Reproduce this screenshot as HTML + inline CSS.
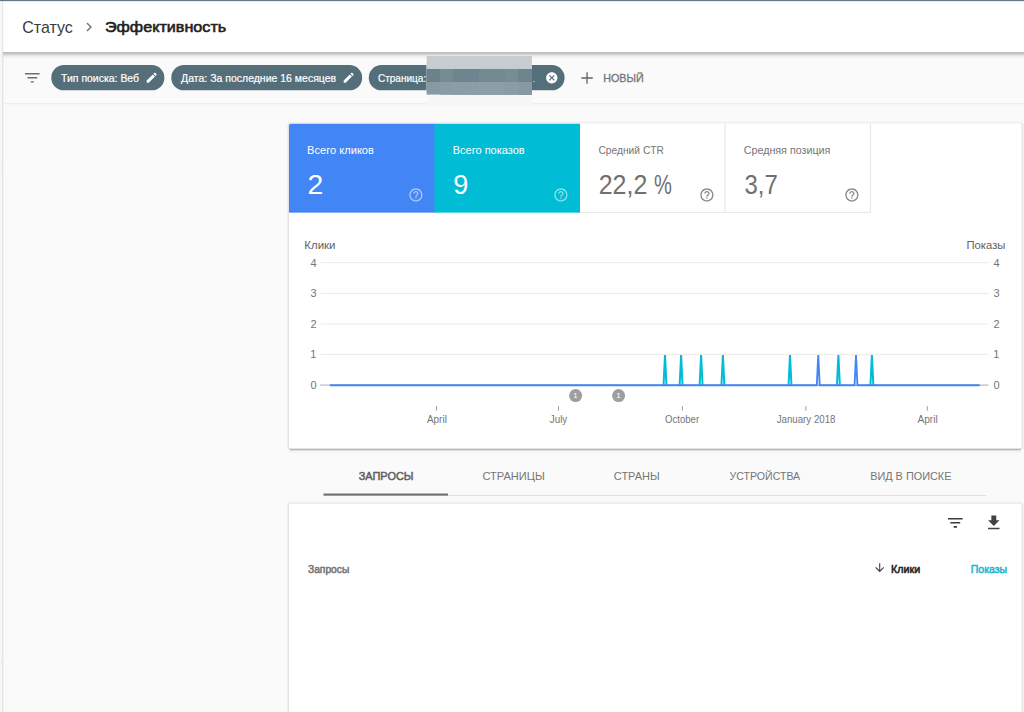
<!DOCTYPE html>
<html lang="ru">
<head>
<meta charset="utf-8">
<title>Эффективность</title>
<style>
*{box-sizing:border-box;margin:0;padding:0}
html,body{width:1024px;height:712px;overflow:hidden;background:#fafafa;font-family:"Liberation Sans",sans-serif}
body{position:relative}
.abs{position:absolute}
.t{position:absolute;white-space:nowrap;line-height:1;transform-origin:0 50%}
#bg{position:absolute;left:0;top:0}
</style>
</head>
<body>
<svg id="bg" width="1024" height="712" viewBox="0 0 1024 712"><defs><linearGradient id="hs" x1="0" y1="0" x2="0" y2="1"><stop offset="0" stop-color="#000" stop-opacity=".24"/><stop offset=".16" stop-color="#000" stop-opacity=".235"/><stop offset=".30" stop-color="#000" stop-opacity=".18"/><stop offset=".44" stop-color="#000" stop-opacity=".11"/><stop offset=".58" stop-color="#000" stop-opacity=".065"/><stop offset=".72" stop-color="#000" stop-opacity=".032"/><stop offset=".86" stop-color="#000" stop-opacity=".012"/><stop offset="1" stop-color="#000" stop-opacity="0"/></linearGradient></defs><rect x="0" y="0" width="2" height="712" fill="#f7f7f7" /><rect x="2" y="0" width="1" height="712" fill="#e6e6e6" /><rect x="3" y="0" width="0.6" height="712" fill="#ececec" /><rect x="0" y="167.4" width="2.4" height="1.2" fill="#e9e9e9" /><rect x="0" y="661.8" width="2.4" height="1" fill="#e9e9e9" /><rect x="3.2" y="103.1" width="1020.8" height="1.2" fill="#ededed" /><rect x="51.25" y="65.05" width="113.15" height="25.3" fill="#546e7a" rx="12.65"/><rect x="171.25" y="65.05" width="190.95" height="25.3" fill="#546e7a" rx="12.65"/><rect x="368.75" y="65.05" width="195.85" height="25.3" fill="#546e7a" rx="12.65"/><rect x="3.2" y="52" width="1020.8" height="7" fill="url(#hs)" /><rect x="426.6" y="56" width="105.3" height="48.7" fill="#f7f7f7" /><rect x="426.6" y="56" width="105.3" height="13" fill="#c5cdd0" /><rect x="426.6" y="69" width="105.3" height="13" fill="#6c818b" /><rect x="426.6" y="82" width="105.3" height="12.6" fill="#8799a2" /><rect x="440" y="69" width="91.9" height="13" fill="#768b94" /><rect x="440" y="82" width="91.9" height="12.6" fill="#8a9ca4" /><rect x="453" y="69" width="78.9" height="13" fill="#6e848f" /><rect x="453" y="82" width="78.9" height="12.6" fill="#8a9ea5" /><rect x="466" y="69" width="65.9" height="13" fill="#6e848f" /><rect x="466" y="82" width="65.9" height="12.6" fill="#8a9ea5" /><rect x="479" y="69" width="52.9" height="13" fill="#748992" /><rect x="479" y="82" width="52.9" height="12.6" fill="#8da0a7" /><rect x="492" y="69" width="39.9" height="13" fill="#748992" /><rect x="492" y="82" width="39.9" height="12.6" fill="#8da0a7" /><rect x="505" y="69" width="26.9" height="13" fill="#788c94" /><rect x="505" y="82" width="26.9" height="12.6" fill="#8a9da5" /><rect x="518" y="69" width="13.9" height="13" fill="#6d838d" /><rect x="518" y="82" width="13.9" height="12.6" fill="#8799a2" /><rect x="531" y="69" width="0.9" height="13" fill="#6f8690" /><rect x="531" y="82" width="0.9" height="12.6" fill="#8799a2" /><rect x="3.4" y="0" width="1020.6" height="52" fill="#fff" /><rect x="0" y="0" width="1024" height="1.15" fill="#617985" /><rect x="289" y="121" width="732.5" height="1" fill="#f7f7f7" /><rect x="288.5" y="122" width="733.3" height="1" fill="#f1f1f1" /><rect x="288.5" y="123" width="733.3" height="1" fill="#eeeeee" /><rect x="287" y="124" width="1" height="325" fill="#f1f1f1" /><rect x="288" y="123" width="1" height="326" fill="#e2e2e2" /><rect x="1021" y="123" width="1" height="325.6" fill="#e8e8e8" /><rect x="1022" y="123" width="1" height="325.8" fill="#e8e8e8" /><rect x="1023" y="124" width="1" height="325" fill="#f0f0f0" /><rect x="288.6" y="448" width="733" height="1" fill="#e4e4e4" /><rect x="289.6" y="449" width="731.3" height="1" fill="#b8b8b8" rx=".5"/><rect x="289.4" y="450" width="731.9" height="1" fill="#e0e0e0" rx=".5"/><rect x="289.4" y="451" width="732.2" height="1" fill="#f2f2f2" /><rect x="290" y="452" width="732" height="1" fill="#f7f7f7" /><rect x="289" y="123.5" width="732.45" height="324.55" fill="#fff" rx="1.5"/><rect x="289" y="501" width="732.5" height="1" fill="#f7f7f7" /><rect x="288.5" y="502" width="733.3" height="1" fill="#f1f1f1" /><rect x="288.5" y="503" width="733.3" height="1" fill="#eeeeee" /><rect x="287" y="504" width="1" height="227" fill="#f1f1f1" /><rect x="288" y="503" width="1" height="228" fill="#e2e2e2" /><rect x="1021" y="503" width="1" height="227.6" fill="#e8e8e8" /><rect x="1022" y="503" width="1" height="227.8" fill="#e8e8e8" /><rect x="1023" y="504" width="1" height="227" fill="#f0f0f0" /><rect x="289" y="504" width="732.45" height="226" fill="#fff" rx="1.5"/><clipPath id="cc"><rect x="289" y="123.5" width="732.45" height="400" rx="2"/></clipPath><g clip-path="url(#cc)"><rect x="289" y="123.5" width="146" height="89.15" fill="#4285f4" /><rect x="434.5" y="123.5" width="145.5" height="89.15" fill="#00bcd4" /></g><rect x="580" y="211.9" width="291" height="1" fill="#e6e6e6" /><rect x="724.5" y="123.5" width="1" height="88.9" fill="#e4e4e4" /><rect x="870" y="123.5" width="1" height="88.9" fill="#e6e6e6" /><rect x="320.2" y="262.2" width="668.3" height="1" fill="#ebebeb" /><rect x="320.2" y="292.94" width="668.3" height="1" fill="#ebebeb" /><rect x="320.2" y="323.35" width="668.3" height="1" fill="#ebebeb" /><rect x="320.2" y="353.94" width="668.3" height="1" fill="#ebebeb" /><rect x="320.2" y="384.3" width="668.3" height="1.7" fill="#cecece" /><g fill="none" stroke="#00bcd4" stroke-width="2" stroke-linejoin="miter"><path d="M663.55 385.1L665.00 355L666.45 385.1"/><path d="M679.65 385.1L681.10 355L682.55 385.1"/><path d="M699.65 385.1L701.10 355L702.55 385.1"/><path d="M721.45 385.1L722.90 355L724.35 385.1"/><path d="M788.55 385.1L790.00 355L791.45 385.1"/><path d="M836.95 385.1L838.40 355L839.85 385.1"/><path d="M870.45 385.1L871.90 355L873.35 385.1"/></g><path d="M329.8 385.25L816.80 385.25L818.25 355L819.70 385.25L854.55 385.25L856.00 355L857.45 385.25L979.7 385.25" fill="none" stroke="#4285f4" stroke-width="1.85" stroke-linejoin="miter"/><rect x="436" y="406.2" width="1" height="4.5" fill="#9e9e9e" /><rect x="558" y="406.2" width="1" height="4.5" fill="#9e9e9e" /><rect x="681.9" y="406.2" width="1" height="4.5" fill="#9e9e9e" /><rect x="805.4" y="406.2" width="1" height="4.5" fill="#9e9e9e" /><rect x="926.8" y="406.2" width="1" height="4.5" fill="#9e9e9e" /><circle cx="575.6" cy="395.6" r="6.5" fill="#9e9e9e"/><circle cx="618.6" cy="395.6" r="6.5" fill="#9e9e9e"/><rect x="323.5" y="495" width="662.5" height="1" fill="#e0e0e0" /><rect x="323.5" y="493.5" width="124.5" height="2.1" fill="#707070" /></svg>
<svg class="abs" style="left:24.70px;top:72.90px" width="15" height="11" viewBox="0 0 15 11"><path d="M0 0.7h14.6M2.4 4.8h9.8M5.65 8.9h3.3" stroke="#6e6e6e" stroke-width="1.4" fill="none"/></svg>
<svg class="abs" style="left:144.80px;top:71.20px;" width="13.4" height="13.4" viewBox="0 0 24 24"><path fill="#fff" d="M3 17.25V21h3.75L17.81 9.94l-3.75-3.75L3 17.25zM20.71 7.04a1 1 0 0 0 0-1.41l-2.34-2.34a1 1 0 0 0-1.41 0l-1.83 1.83 3.75 3.75 1.83-1.83z"/></svg>
<svg class="abs" style="left:342.00px;top:71.20px;" width="13.4" height="13.4" viewBox="0 0 24 24"><path fill="#fff" d="M3 17.25V21h3.75L17.81 9.94l-3.75-3.75L3 17.25zM20.71 7.04a1 1 0 0 0 0-1.41l-2.34-2.34a1 1 0 0 0-1.41 0l-1.83 1.83 3.75 3.75 1.83-1.83z"/></svg>
<svg class="abs" style="left:544.80px;top:70.90px;" width="13.6" height="13.6" viewBox="0 0 24 24"><path fill="#fff" d="M12 2C6.47 2 2 6.47 2 12s4.47 10 10 10 10-4.47 10-10S17.53 2 12 2zm5 13.59L15.59 17 12 13.41 8.41 17 7 15.59 10.59 12 7 8.41 8.41 7 12 10.59 15.59 7 17 8.41 13.41 12 17 15.59z"/></svg>
<div class="abs" style="left:533px;top:81px;width:2px;height:1px;background:#a3b3bb"></div>
<div class="abs" style="left:0;top:60px;width:427px;height:40px;overflow:hidden"><div class="abs" style="left:0;top:-60px"><span id="c3" class="t" style="left:378px;top:73px;font-size:11px;font-weight:normal;color:#fff;transform:translateX(-0.10px) scaleX(0.9126);-webkit-text-stroke:0.2px #fff;">Страница:</span></div></div>
<span id="c1" class="t" style="left:61px;top:73px;font-size:11px;font-weight:normal;color:#fff;transform:translateX(0.05px) scaleX(0.9508);-webkit-text-stroke:0.2px #fff;">Тип поиска: Веб</span>
<span id="c2" class="t" style="left:181px;top:73px;font-size:11px;font-weight:normal;color:#fff;transform:translateX(0.10px) scaleX(0.9537);-webkit-text-stroke:0.2px #fff;">Дата: За последние 16 месяцев</span>
<svg class="abs" style="left:581px;top:72px" width="12" height="12" viewBox="0 0 12 12"><path d="M6.05 0.2v11.5M0.3 5.95h11.5" stroke="#666" stroke-width="1.35"/></svg>
<span id="new" class="t" style="left:604px;top:73px;font-size:11px;font-weight:normal;color:#757575;transform:translateX(-0.85px) scaleX(0.9762);-webkit-text-stroke:0.3px #757575;">НОВЫЙ</span>
<span id="h1" class="t" style="left:23px;top:19px;font-size:16.4px;font-weight:normal;color:#3a3a3a;transform:translateX(-0.75px) scaleX(0.9754);">Статус</span>
<span id="h2" class="t" style="left:105px;top:19px;font-size:15.5px;font-weight:normal;color:#212121;transform:translateX(-0.10px) scaleX(1.0433);-webkit-text-stroke:0.6px #212121;">Эффективность</span>
<svg class="abs" style="left:79.90px;top:18.00px;" width="18" height="18" viewBox="0 0 24 24"><path fill="#7a7a7a" d="M10 6L8.59 7.41 13.17 12l-4.58 4.59L10 18l6-6z"/></svg>
<span id="l1" class="t" style="left:308px;top:145px;font-size:11px;font-weight:normal;color:#fff;transform:translateX(-0.90px) scaleX(1.0078);">Всего кликов</span>
<span id="v1" class="t" style="left:308px;top:171px;font-size:27.5px;font-weight:normal;color:#fff;transform:translateX(-0.55px) scaleX(1.0310);">2</span>
<span id="l2" class="t" style="left:453px;top:145px;font-size:11px;font-weight:normal;color:#fff;transform:translateX(-0.25px) scaleX(1.0000);">Всего показов</span>
<span id="v2" class="t" style="left:454px;top:171px;font-size:27.5px;font-weight:normal;color:#fff;transform:translateX(-0.85px) scaleX(0.9807);">9</span>
<span id="l3" class="t" style="left:598px;top:145px;font-size:11px;font-weight:normal;color:#757575;transform:translateX(0.40px) scaleX(0.9315);">Средний CTR</span>
<span id="v3" class="t" style="left:600px;top:171px;font-size:27.5px;font-weight:normal;color:#707070;transform:translateX(-1.35px) scaleX(0.9087);">22,2</span>
<span id="v3b" class="t" style="left:654px;top:171px;font-size:27.5px;font-weight:normal;color:#707070;transform:translateX(0.00px) scaleX(0.7303);"> %</span>
<span id="l4" class="t" style="left:744px;top:145px;font-size:11px;font-weight:normal;color:#757575;transform:translateX(-0.30px) scaleX(0.9744);">Средняя позиция</span>
<span id="v4" class="t" style="left:745px;top:171px;font-size:27.5px;font-weight:normal;color:#707070;transform:translateX(-0.50px) scaleX(0.8715);">3,7</span>
<svg class="abs" style="left:407.60px;top:186.90px;opacity:0.55" width="15.8" height="15.8" viewBox="0 0 24 24"><path fill="#fff" d="M11 18h2v-2h-2v2zm1-16C6.48 2 2 6.48 2 12s4.48 10 10 10 10-4.48 10-10S17.52 2 12 2zm0 18c-4.41 0-8-3.59-8-8s3.59-8 8-8 8 3.59 8 8-3.59 8-8 8zm0-14c-2.21 0-4 1.79-4 4h2c0-1.1.9-2 2-2s2 .9 2 2c0 2-3 1.75-3 5h2c0-2.25 3-2.5 3-5 0-2.21-1.79-4-4-4z"/></svg>
<svg class="abs" style="left:553.30px;top:186.90px;opacity:0.55" width="15.8" height="15.8" viewBox="0 0 24 24"><path fill="#fff" d="M11 18h2v-2h-2v2zm1-16C6.48 2 2 6.48 2 12s4.48 10 10 10 10-4.48 10-10S17.52 2 12 2zm0 18c-4.41 0-8-3.59-8-8s3.59-8 8-8 8 3.59 8 8-3.59 8-8 8zm0-14c-2.21 0-4 1.79-4 4h2c0-1.1.9-2 2-2s2 .9 2 2c0 2-3 1.75-3 5h2c0-2.25 3-2.5 3-5 0-2.21-1.79-4-4-4z"/></svg>
<svg class="abs" style="left:698.60px;top:186.90px;opacity:1" width="15.8" height="15.8" viewBox="0 0 24 24"><path fill="#888" d="M11 18h2v-2h-2v2zm1-16C6.48 2 2 6.48 2 12s4.48 10 10 10 10-4.48 10-10S17.52 2 12 2zm0 18c-4.41 0-8-3.59-8-8s3.59-8 8-8 8 3.59 8 8-3.59 8-8 8zm0-14c-2.21 0-4 1.79-4 4h2c0-1.1.9-2 2-2s2 .9 2 2c0 2-3 1.75-3 5h2c0-2.25 3-2.5 3-5 0-2.21-1.79-4-4-4z"/></svg>
<svg class="abs" style="left:843.90px;top:186.90px;opacity:1" width="15.8" height="15.8" viewBox="0 0 24 24"><path fill="#888" d="M11 18h2v-2h-2v2zm1-16C6.48 2 2 6.48 2 12s4.48 10 10 10 10-4.48 10-10S17.52 2 12 2zm0 18c-4.41 0-8-3.59-8-8s3.59-8 8-8 8 3.59 8 8-3.59 8-8 8zm0-14c-2.21 0-4 1.79-4 4h2c0-1.1.9-2 2-2s2 .9 2 2c0 2-3 1.75-3 5h2c0-2.25 3-2.5 3-5 0-2.21-1.79-4-4-4z"/></svg>
<span id="ay1" class="t" style="left:305px;top:240px;font-size:11.2px;font-weight:normal;color:#616161;transform:translateX(-0.70px) scaleX(1.0263);">Клики</span>
<span id="ay2" class="t" style="left:967px;top:240px;font-size:11.2px;font-weight:normal;color:#616161;transform:translateX(-0.50px) scaleX(1.0068);">Показы</span>
<span id="yl0" class="t" style="left:310px;top:258px;font-size:11px;font-weight:normal;color:#757575;transform:translateX(0.40px) scaleX(1.0000);">4</span>
<span id="yl1" class="t" style="left:310px;top:288px;font-size:11px;font-weight:normal;color:#757575;transform:translateX(0.52px) scaleX(1.0000);">3</span>
<span id="yl2" class="t" style="left:310px;top:319px;font-size:11px;font-weight:normal;color:#757575;transform:translateX(0.40px) scaleX(1.0000);">2</span>
<span id="yl3" class="t" style="left:310px;top:349px;font-size:11px;font-weight:normal;color:#757575;transform:translateX(0.27px) scaleX(1.0000);">1</span>
<span id="yl4" class="t" style="left:310px;top:380px;font-size:11px;font-weight:normal;color:#757575;transform:translateX(0.52px) scaleX(1.0000);">0</span>
<span id="yr0" class="t" style="left:993px;top:258px;font-size:11px;font-weight:normal;color:#757575;transform:translateX(0.52px) scaleX(1.0000);">4</span>
<span id="yr1" class="t" style="left:993px;top:288px;font-size:11px;font-weight:normal;color:#757575;transform:translateX(0.40px) scaleX(1.0000);">3</span>
<span id="yr2" class="t" style="left:993px;top:319px;font-size:11px;font-weight:normal;color:#757575;transform:translateX(0.52px) scaleX(1.0000);">2</span>
<span id="yr3" class="t" style="left:993px;top:349px;font-size:11px;font-weight:normal;color:#757575;transform:translateX(0.27px) scaleX(1.0000);">1</span>
<span id="yr4" class="t" style="left:993px;top:380px;font-size:11px;font-weight:normal;color:#757575;transform:translateX(0.52px) scaleX(1.0000);">0</span>
<span id="k1" class="t" style="left:574px;top:392px;font-size:8px;font-weight:normal;color:#fff;transform:translateX(-0.80px) scaleX(1.0000);">1</span>
<span id="k2" class="t" style="left:617px;top:392px;font-size:8px;font-weight:normal;color:#fff;transform:translateX(-0.80px) scaleX(1.0000);">1</span>
<span id="mA" class="t" style="left:426px;top:414px;font-size:11px;font-weight:normal;color:#757575;transform:translateX(0.90px) scaleX(0.9065);">April</span>
<span id="mB" class="t" style="left:550px;top:414px;font-size:11px;font-weight:normal;color:#757575;transform:translateX(-0.25px) scaleX(0.8961);">July</span>
<span id="mC" class="t" style="left:665px;top:414px;font-size:11px;font-weight:normal;color:#757575;transform:translateX(0.10px) scaleX(0.8695);">October</span>
<span id="mD" class="t" style="left:776px;top:414px;font-size:11px;font-weight:normal;color:#757575;transform:translateX(0.65px) scaleX(0.8826);">January 2018</span>
<span id="mE" class="t" style="left:917px;top:414px;font-size:11px;font-weight:normal;color:#757575;transform:translateX(0.50px) scaleX(0.9176);">April</span>
<span id="t1" class="t" style="left:359px;top:471px;font-size:11px;font-weight:normal;color:#616161;transform:translateX(-0.35px) scaleX(0.9957);-webkit-text-stroke:0.5px #616161;">ЗАПРОСЫ</span>
<span id="t2" class="t" style="left:483px;top:471px;font-size:11px;font-weight:normal;color:#757575;transform:translateX(-0.60px) scaleX(1.0078);">СТРАНИЦЫ</span>
<span id="t3" class="t" style="left:614px;top:471px;font-size:11px;font-weight:normal;color:#757575;transform:translateX(-0.15px) scaleX(0.9963);">СТРАНЫ</span>
<span id="t4" class="t" style="left:729px;top:471px;font-size:11px;font-weight:normal;color:#757575;transform:translateX(0.60px) scaleX(0.9604);">УСТРОЙСТВА</span>
<span id="t5" class="t" style="left:871px;top:471px;font-size:11px;font-weight:normal;color:#757575;transform:translateX(-0.85px) scaleX(0.9888);">ВИД В ПОИСКЕ</span>
<svg class="abs" style="left:947.90px;top:517.60px" width="15" height="11" viewBox="0 0 15 11"><path d="M0 0.7h14.6M2.4 4.8h9.8M5.65 8.9h3.3" stroke="#3d3d3d" stroke-width="1.6" fill="none"/></svg>
<svg class="abs" style="left:984.10px;top:512.50px;" width="19.6" height="19.6" viewBox="0 0 24 24"><path fill="#424242" d="M19 9h-4V3H9v6H5l7 7 7-7zM5 18v2h14v-2H5z"/></svg>
<svg class="abs" style="left:873.40px;top:561.30px;" width="13.4" height="13.4" viewBox="0 0 24 24"><path fill="#424242" d="M20 12l-1.41-1.41L13 16.17V4h-2v12.17l-5.58-5.59L4 12l8 8 8-8z"/></svg>
<span id="q1" class="t" style="left:308px;top:564px;font-size:11px;font-weight:normal;color:#757575;transform:translateX(0.00px) scaleX(0.9304);-webkit-text-stroke:0.55px #757575;">Запросы</span>
<span id="q2" class="t" style="left:892px;top:564px;font-size:11px;font-weight:normal;color:#212121;transform:translateX(-0.90px) scaleX(0.9738);-webkit-text-stroke:0.55px #212121;">Клики</span>
<span id="q3" class="t" style="left:971px;top:564px;font-size:11px;font-weight:normal;color:#1fb6cf;transform:translateX(-0.25px) scaleX(0.9587);-webkit-text-stroke:0.55px #1fb6cf;">Показы</span>
</body>
</html>
